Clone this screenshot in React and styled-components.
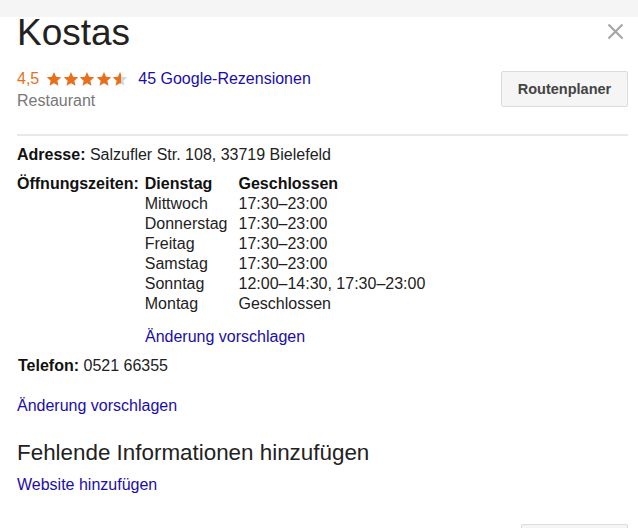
import React from 'react'
import styled, { createGlobalStyle } from 'styled-components'

const GlobalStyle = createGlobalStyle`
  html, body {
    margin: 0;
    padding: 0;
    background: #fff;
    overflow: hidden;
    font-family: "Liberation Sans", Arial, sans-serif;
    color: #222;
  }
`

const hours = [
  { day: 'Dienstag', time: 'Geschlossen', today: true },
  { day: 'Mittwoch', time: '17:30–23:00' },
  { day: 'Donnerstag', time: '17:30–23:00' },
  { day: 'Freitag', time: '17:30–23:00' },
  { day: 'Samstag', time: '17:30–23:00' },
  { day: 'Sonntag', time: '12:00–14:30, 17:30–23:00' },
  { day: 'Montag', time: 'Geschlossen' },
]

const TopBand = styled.div`
  height: 17px;
  background: #f5f5f5;
`

const Panel = styled.div`
  padding: 0 10px 0 17px;
`

const Header = styled.div`
  display: flex;
  justify-content: space-between;
  align-items: flex-start;
`

const TitleBlock = styled.div`
  display: flex;
  flex-direction: column;
`

const Title = styled.h1`
  margin: 0;
  font-size: 37px;
  line-height: 32px;
  font-weight: normal;
  color: #222;
`

const RatingRow = styled.div`
  display: flex;
  align-items: center;
  margin-top: 19px;
  font-size: 16px;
  line-height: 22px;
`

const Score = styled.span`
  color: #e7711b;
`

const Stars = styled.span`
  display: flex;
  gap: 0.5px;
  margin: 0 10px 0 7px;
`

const Category = styled.div`
  font-size: 16px;
  line-height: 22px;
  color: #777;
`

const Link = styled.a`
  color: #1a0dab;
  text-decoration: none;
  font-size: 16px;
  cursor: pointer;
`

const Side = styled.div`
  display: flex;
  flex-direction: column;
  align-items: flex-end;
`

const Close = styled.button`
  border: 0;
  background: none;
  padding: 0;
  margin: 6px 4px 0 0;
  width: 17px;
  height: 17px;
  cursor: pointer;
  display: flex;
`

const Button = styled.button`
  font-family: "Liberation Sans", Arial, sans-serif;
  font-weight: bold;
  font-size: 14.5px;
  color: #444;
  background: #f5f5f5;
  border: 1px solid #dcdcdc;
  border-radius: 2px;
  height: 36px;
  width: ${({ width }) => width}px;
  margin-top: ${({ top }) => top}px;
  cursor: pointer;
`

const Divider = styled.hr`
  border: 0;
  height: 2px;
  background: #e8e8e8;
  margin: 22px 0 9px 0;
`

const Line = styled.div`
  font-size: 16px;
  line-height: 20px;
  margin-top: ${({ top }) => top || 0}px;
  padding-left: ${({ indent }) => indent || 0}px;
`

const Label = styled.b`
  color: #111;
`

const HoursBlock = styled.div`
  display: flex;
  font-size: 16px;
  line-height: 20px;
  margin-top: 9px;
`

const HoursTable = styled.div`
  display: grid;
  grid-template-columns: auto auto;
  column-gap: 11px;
  margin-left: 6px;
`

const Cell = styled.span`
  font-weight: ${({ bold }) => (bold ? 'bold' : 'normal')};
  color: ${({ bold }) => (bold ? '#111' : '#222')};
`

const SubTitle = styled.h2`
  margin: 24px 0 0 0;
  font-size: 22.4px;
  line-height: 26px;
  font-weight: normal;
  color: #222;
`

const Footer = styled.div`
  display: flex;
  justify-content: flex-end;
  margin-top: 29px;
`

const Star = ({ fill }) => (
  <svg width="16" height="16" viewBox="0 0 24 24">
    <defs>
      <linearGradient id={`g${fill}`}>
        <stop offset={fill} stopColor="#e7711b" />
        <stop offset={fill} stopColor="#d0d8e2" />
      </linearGradient>
    </defs>
    <path
      d="M12 1.5l3.1 7.2 7.8.7-5.9 5.2 1.8 7.7L12 18.2l-6.8 4.1 1.8-7.7-5.9-5.2 7.8-.7z"
      fill={`url(#g${fill})`}
    />
  </svg>
)

export default function App() {
  return (
    <>
      <GlobalStyle />
      <TopBand />
      <Panel>
        <Header>
          <TitleBlock>
            <Title>Kostas</Title>
            <RatingRow>
              <Score>4,5</Score>
              <Stars>
                {[1, 1, 1, 1, 0.55].map((f, i) => (
                  <Star key={i} fill={f} />
                ))}
              </Stars>
              <Link>45 Google-Rezensionen</Link>
            </RatingRow>
            <Category>Restaurant</Category>
          </TitleBlock>
          <Side>
            <Close aria-label="Schließen">
              <svg width="17" height="17" viewBox="0 0 17 17">
                <path d="M1.5 1.5l14 14M15.5 1.5l-14 14" stroke="#a6a6a6" strokeWidth="2.2" />
              </svg>
            </Close>
            <Button width={127} top={31}>Routenplaner</Button>
          </Side>
        </Header>
        <Divider />
        <Line>
          <Label>Adresse:</Label> Salzufler Str. 108, 33719 Bielefeld
        </Line>
        <HoursBlock>
          <Label>Öffnungszeiten:</Label>
          <HoursTable>
            {hours.map((h) => (
              <React.Fragment key={h.day}>
                <Cell bold={h.today}>{h.day}</Cell>
                <Cell bold={h.today}>{h.time}</Cell>
              </React.Fragment>
            ))}
          </HoursTable>
        </HoursBlock>
        <Line top={13} indent={128}>
          <Link>Änderung vorschlagen</Link>
        </Line>
        <Line top={9} indent={1}>
          <Label>Telefon:</Label> 0521 66355
        </Line>
        <Line top={20}>
          <Link>Änderung vorschlagen</Link>
        </Line>
        <SubTitle>Fehlende Informationen hinzufügen</SubTitle>
        <Line top={9}>
          <Link>Website hinzufügen</Link>
        </Line>
        <Footer>
          <Button width={107} top={0} aria-label="Speichern" />
        </Footer>
      </Panel>
    </>
  )
}
